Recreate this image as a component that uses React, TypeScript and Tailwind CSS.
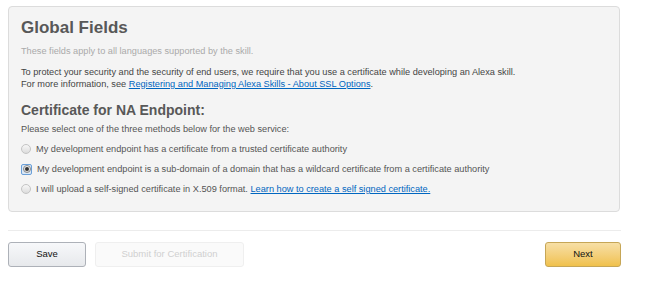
import React from "react";

const Radio = ({ checked = false }: { checked?: boolean }) => {
  if (checked) {
    return (
      <span className="flex h-[11px] w-[11px] shrink-0 items-center justify-center rounded-[2px] border border-[#6a9fd8] bg-[#dbe8f6]">
        <span className="flex h-[8px] w-[8px] items-center justify-center rounded-full border border-[#8a8a8a] bg-gradient-to-b from-[#f4f4f4] to-[#d6d6d6]">
          <span className="h-[4px] w-[4px] rounded-full bg-[#333]" />
        </span>
      </span>
    );
  }
  return (
    <span className="h-[10px] w-[10px] shrink-0 rounded-full border border-[#c4c4c4] bg-gradient-to-b from-[#f7f7f7] to-[#dcdcdc]" />
  );
};

const App = () => {
  return (
    <div className="min-h-[285px] w-[650px] bg-white pl-[8px] pr-[30px] pt-[6px] font-['Liberation_Sans',Arial,sans-serif] text-[#555]">
      {/* Global fields panel */}
      <div className="w-[612px] rounded-[4px] border border-[#dcdcdc] bg-[#f4f4f4] pb-[12px] pl-[12px] pt-[11px]">
        <h1 className="text-[17px] font-bold leading-[20px] text-[#585858]">Global Fields</h1>
        <p className="mt-[7px] text-[9.2px] leading-[12px] text-[#aaa]">
          These fields apply to all languages supported by the skill.
        </p>
        <p className="mt-[10px] text-[9.2px] leading-[11.5px] text-[#444]">
          To protect your security and the security of end users, we require that you use a certificate while
          developing an Alexa skill.
          <br />
          For more information, see{" "}
          <a href="#" className="text-[#0066c0] underline">
            Registering and Managing Alexa Skills - About SSL Options
          </a>
          .
        </p>

        <h2 className="mt-[11.5px] text-[14px] font-bold leading-[17px] text-[#585858]">
          Certificate for NA Endpoint:
        </h2>
        <p className="mt-[4px] text-[9.2px] leading-[12px] text-[#555]">
          Please select one of the three methods below for the web service:
        </p>

        <div className="mt-[4.5px] flex flex-col text-[9.2px] leading-[12px] text-[#555]">
          <label className="flex h-[20px] items-center gap-[5px]">
            <Radio />
            <span>My development endpoint has a certificate from a trusted certificate authority</span>
          </label>
          <label className="flex h-[20px] items-center gap-[5px]">
            <Radio checked />
            <span>My development endpoint is a sub-domain of a domain that has a wildcard certificate from a certificate authority</span>
          </label>
          <label className="flex h-[20px] items-center gap-[5px]">
            <Radio />
            <span>
              I will upload a self-signed certificate in X.509 format.{" "}
              <a href="#" className="text-[#0066c0] underline">
                Learn how to create a self signed certificate.
              </a>
            </span>
          </label>
        </div>
      </div>

      {/* Divider */}
      <div className="mt-[18px] h-px w-[613px] bg-[#ececec]" />

      {/* Actions */}
      <div className="mt-[11px] flex w-[613px] items-center">
        <button className="h-[25px] w-[78px] rounded-[3px] border border-[#adb1b8] bg-gradient-to-b from-[#f7f8fa] to-[#e7e9ec] text-[9.5px] text-[#111]">
          Save
        </button>
        <button
          disabled
          className="ml-[9px] h-[25px] w-[149px] rounded-[3px] border border-[#efefef] bg-[#fafafa] text-[9.5px] text-[#d0d0d0]"
        >
          Submit for Certification
        </button>
        <button className="ml-auto h-[25px] w-[76px] rounded-[3px] border border-[#c6a656] bg-gradient-to-b from-[#f7dfa5] to-[#f0c14b] text-[9.5px] text-[#111]">
          Next
        </button>
      </div>
    </div>
  );
};

export default App;
